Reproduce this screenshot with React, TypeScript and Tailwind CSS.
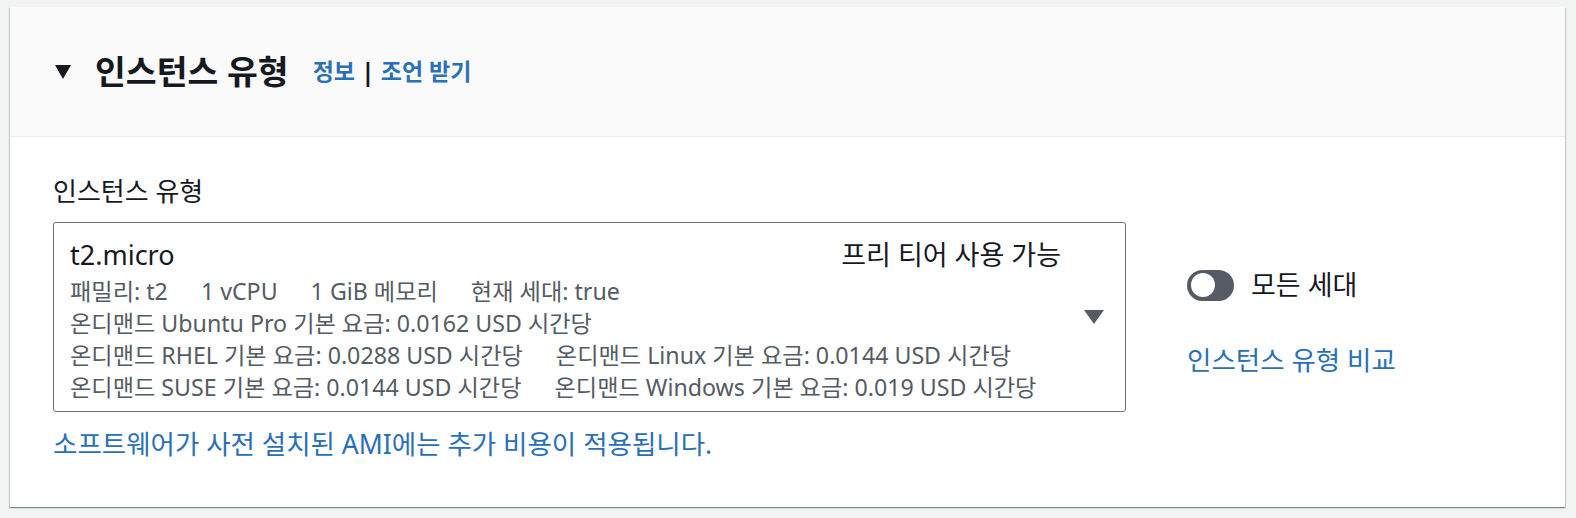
import React from "react";

const font = { fontFamily: '"Noto Sans", "Noto Sans CJK KR", sans-serif' };

const PriceRow: React.FC<{ items: string[] }> = ({ items }) => (
  <div className="flex gap-[33px] h-[32px] items-center whitespace-nowrap">
    {items.map((t) => (
      <span key={t}>{t}</span>
    ))}
  </div>
);

const App: React.FC = () => {
  return (
    <div style={font} className="min-h-screen bg-[#f2f3f3] pt-[7px] pl-[10px] pr-[11px] pb-[11px]">
      <div className="bg-white shadow-[0_1px_1px_0_rgba(0,28,36,0.3),1px_1px_1px_0_rgba(0,28,36,0.15),-1px_1px_1px_0_rgba(0,28,36,0.15)]">
        {/* Header */}
        <div className="h-[130px] bg-[#fafafa] border-b border-[#eaeded] flex items-center pl-[45px]">
          <svg width="16" height="14" viewBox="0 0 16 14">
            <path d="M0 0 L16 0 L8 14 Z" fill="#16191f" />
          </svg>
          <h2 className="ml-[24px] text-[33.5px] font-bold text-[#16191f] leading-none">인스턴스 유형</h2>
          <div className="ml-[24px] flex items-center text-[23px] font-bold text-[#2a70b8]">
            <span>정보</span>
            <span className="mx-[6px] text-[#16191f] text-[25px]">|</span>
            <span>조언 받기</span>
          </div>
        </div>

        {/* Body */}
        <div className="pl-[43px] pt-[38px] pb-[46px]">
          <div className="text-[26px] leading-[32px] text-[#16191f] mb-[15px]">인스턴스 유형</div>
          <div className="flex">
            <div className="w-[1073px] h-[190px] border border-[#687078] rounded-[3px] flex">
              <div className="flex-1 pl-[16px] pt-[16px]">
                <div className="flex justify-between items-center h-[32px] text-[#16191f]">
                  <span className="text-[27px]">t2.micro</span>
                  <span className="text-[27px]">프리 티어 사용 가능</span>
                </div>
                <div className="mt-[4px] text-[23.2px] text-[#545b64]">
                  <PriceRow items={["패밀리: t2", "1 vCPU", "1 GiB 메모리", "현재 세대: true"]} />
                  <PriceRow items={["온디맨드 Ubuntu Pro 기본 요금: 0.0162 USD 시간당"]} />
                  <PriceRow
                    items={["온디맨드 RHEL 기본 요금: 0.0288 USD 시간당", "온디맨드 Linux 기본 요금: 0.0144 USD 시간당"]}
                  />
                  <PriceRow
                    items={["온디맨드 SUSE 기본 요금: 0.0144 USD 시간당", "온디맨드 Windows 기본 요금: 0.019 USD 시간당"]}
                  />
                </div>
              </div>
              <div className="flex items-center pl-[23px] pr-[21px]">
                <svg width="20" height="14" viewBox="0 0 20 14">
                  <path d="M0 0 L20 0 L10 14 Z" fill="#545b64" />
                </svg>
              </div>
            </div>

            <div className="ml-[61px] pt-[43px]">
              <div className="flex items-center gap-[17px]">
                <div className="w-[47px] h-[31px] rounded-full bg-[#545b64] flex items-center pl-[4px]">
                  <div className="w-[24px] h-[24px] rounded-full bg-white" />
                </div>
                <span className="text-[27px] text-[#16191f]">모든 세대</span>
              </div>
              <div className="mt-[35px] text-[26.5px] text-[#2a70b8]">인스턴스 유형 비교</div>
            </div>
          </div>
          <div className="mt-[15px] text-[26.5px] leading-[34px] text-[#2a70b8]">
            소프트웨어가 사전 설치된 AMI에는 추가 비용이 적용됩니다.
          </div>
        </div>
      </div>
    </div>
  );
};

export default App;
